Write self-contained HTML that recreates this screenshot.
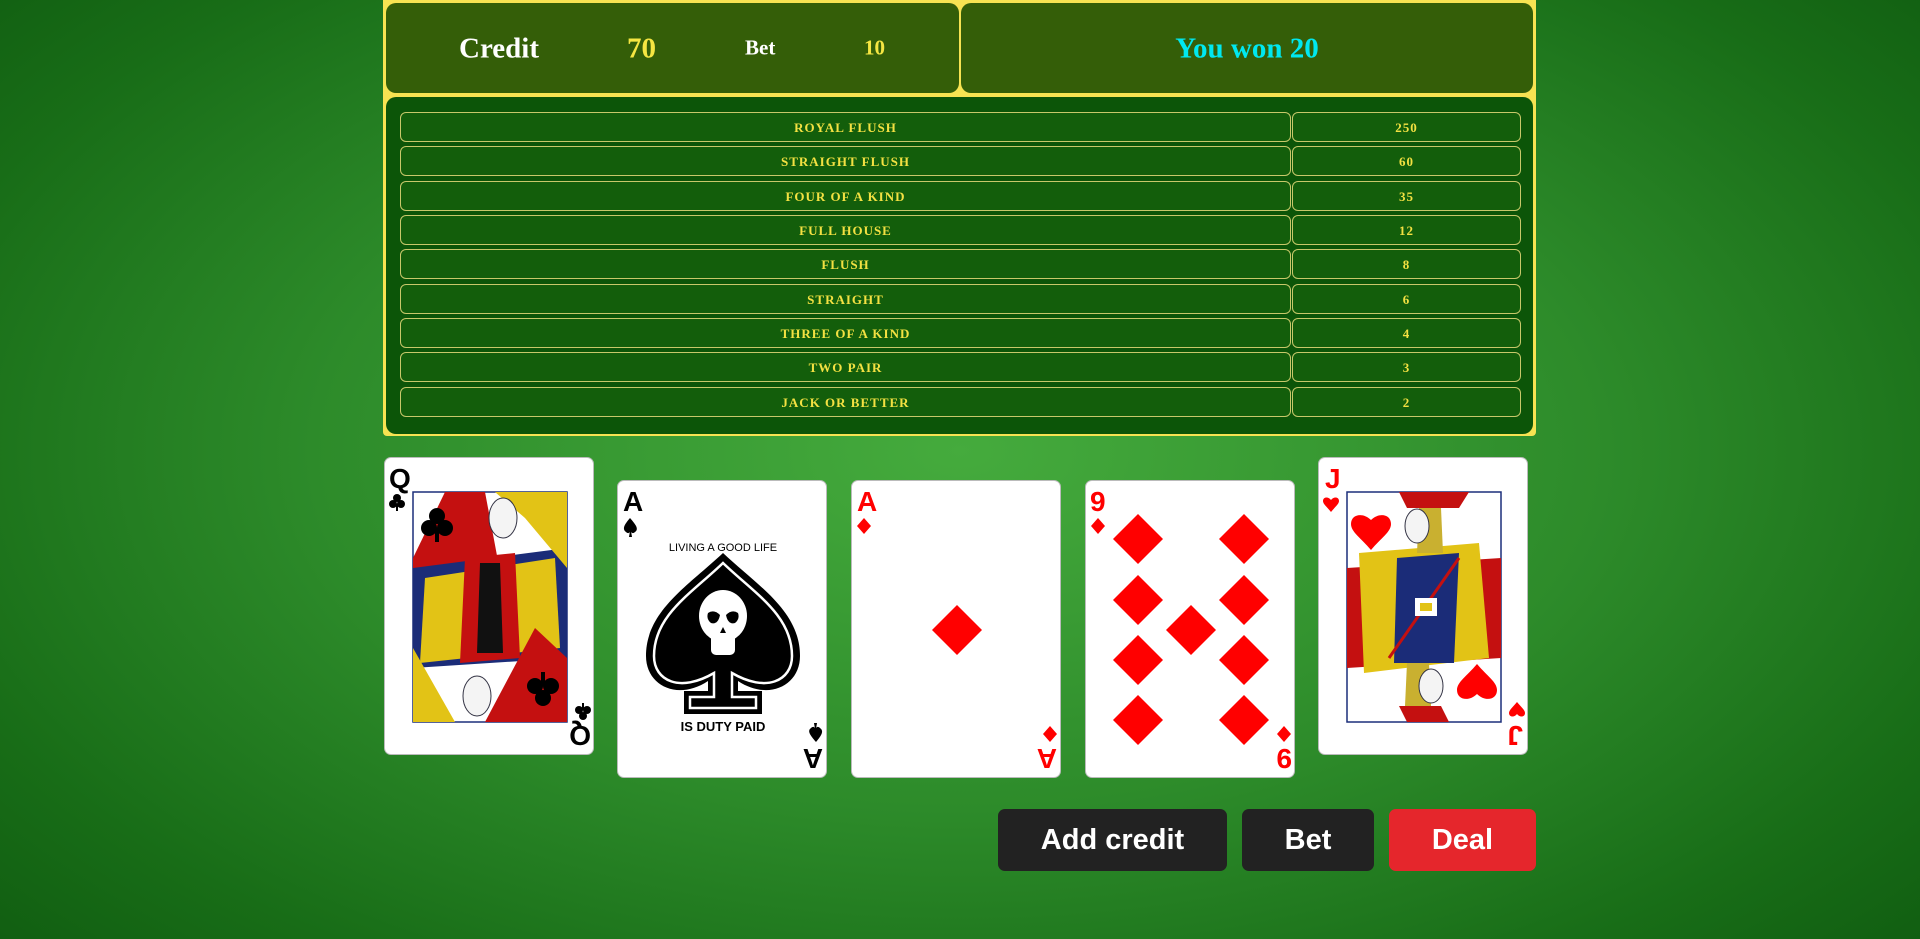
<!DOCTYPE html>
<html><head><meta charset="utf-8"><style>
html,body{margin:0;padding:0;width:1920px;height:939px;overflow:hidden;}
body{background:radial-gradient(ellipse 75% 85% at 50% 48%,#45ab3d 0%,#2d8b2a 45%,#186d17 75%,#0d560e 100%);font-family:"Liberation Serif",serif;position:relative;}
.wrap{position:absolute;left:383px;top:0;width:1153px;height:436px;background:#f7e352;border-radius:0 0 4px 4px;}
.hb{position:absolute;top:3px;height:90px;background:#345e08;border-radius:10px;}
.t{position:absolute;font-weight:bold;white-space:nowrap;transform:translateY(-50%);}
.pt{position:absolute;left:3px;top:97px;width:1147px;height:337px;background:#0c5508;border-radius:10px;}
.row{position:absolute;height:30px;background:#135e0b;border:1px solid #c8c86a;border-radius:6px;box-sizing:border-box;color:#f3e142;font-weight:bold;font-size:13px;letter-spacing:1px;text-align:center;line-height:30px;}
.card{position:absolute;width:210px;height:298px;background:#fff;border-radius:7px;border:1px solid #bbb;box-sizing:border-box;overflow:hidden;}
.card svg{position:absolute;left:0;top:0;}
.btn{position:absolute;top:809px;height:62px;border-radius:7px;background:#222;color:#fff;font-family:"Liberation Sans",sans-serif;font-weight:bold;font-size:29px;text-align:center;line-height:62px;}
</style></head><body>
<div class="wrap">
 <div class="hb" style="left:3px;width:573px;"></div>
 <div class="hb" style="left:578px;width:572px;"></div>
 <div class="t" style="left:76px;top:49px;font-size:29px;color:#fff;">Credit</div>
 <div class="t" style="left:244px;top:49px;font-size:29px;color:#f5e642;">70</div>
 <div class="t" style="left:362px;top:48px;font-size:21px;color:#fff;">Bet</div>
 <div class="t" style="left:481px;top:48px;font-size:21px;color:#f5e642;">10</div>
 <div class="t" style="left:864px;top:49px;font-size:29px;color:#00e8f0;transform:translate(-50%,-50%);">You won 20</div>
 <div class="pt">
  <div class="row" style="left:14px;top:15px;width:891px;">ROYAL FLUSH</div><div class="row" style="left:906px;top:15px;width:229px;">250</div>
  <div class="row" style="left:14px;top:49px;width:891px;">STRAIGHT FLUSH</div><div class="row" style="left:906px;top:49px;width:229px;">60</div>
  <div class="row" style="left:14px;top:84px;width:891px;">FOUR OF A KIND</div><div class="row" style="left:906px;top:84px;width:229px;">35</div>
  <div class="row" style="left:14px;top:118px;width:891px;">FULL HOUSE</div><div class="row" style="left:906px;top:118px;width:229px;">12</div>
  <div class="row" style="left:14px;top:152px;width:891px;">FLUSH</div><div class="row" style="left:906px;top:152px;width:229px;">8</div>
  <div class="row" style="left:14px;top:187px;width:891px;">STRAIGHT</div><div class="row" style="left:906px;top:187px;width:229px;">6</div>
  <div class="row" style="left:14px;top:221px;width:891px;">THREE OF A KIND</div><div class="row" style="left:906px;top:221px;width:229px;">4</div>
  <div class="row" style="left:14px;top:255px;width:891px;">TWO PAIR</div><div class="row" style="left:906px;top:255px;width:229px;">3</div>
  <div class="row" style="left:14px;top:290px;width:891px;">JACK OR BETTER</div><div class="row" style="left:906px;top:290px;width:229px;">2</div>
 </div>
</div>

<div class="card" style="left:384px;top:457px;">
<svg width="210" height="298" viewBox="0 0 210 298" font-family="Liberation Sans,sans-serif" font-weight="bold">
 <rect x="28" y="34" width="154" height="230" fill="#fff" stroke="#1c2f7a" stroke-width="1.5"/>
 <path d="M60 34 L100 34 L120 140 L70 150 L28 130 L28 100Z" fill="#c41010"/>
 <path d="M28 110 L182 90 L182 200 L28 210Z" fill="#1b2c78"/>
 <path d="M40 120 L170 100 L175 190 L35 205Z" fill="#e2c316"/>
 <path d="M80 100 L130 95 L135 200 L75 205Z" fill="#c41010"/>
 <path d="M95 105 L115 105 L118 195 L92 195Z" fill="#111"/>
 <path d="M110 34 L182 34 L182 110 L140 60Z" fill="#e2c316"/>
 <path d="M28 190 L70 264 L28 264Z" fill="#e2c316"/>
 <path d="M100 264 L182 264 L182 200 L150 170Z" fill="#c41010"/>
 <ellipse cx="118" cy="60" rx="14" ry="20" fill="#f4f4f4" stroke="#334" stroke-width="1"/>
 <ellipse cx="92" cy="238" rx="14" ry="20" fill="#f4f4f4" stroke="#334" stroke-width="1"/>
 <g fill="#000"><circle cx="52" cy="58" r="8"/><circle cx="44" cy="70" r="8"/><circle cx="60" cy="70" r="8"/><rect x="50" y="70" width="4" height="14"/></g>
 <g fill="#000"><circle cx="158" cy="240" r="8"/><circle cx="150" cy="228" r="8"/><circle cx="166" cy="228" r="8"/><rect x="156" y="214" width="4" height="14"/></g>
 <text x="4" y="30" font-size="28" fill="#000">Q</text>
 <g fill="#000"><circle cx="12" cy="40" r="4"/><circle cx="8" cy="46" r="4"/><circle cx="16" cy="46" r="4"/><rect x="11" y="46" width="2" height="7"/></g>
 <g transform="rotate(180 105 149)"><text x="4" y="30" font-size="28" fill="#000">Q</text>
 <g fill="#000"><circle cx="12" cy="40" r="4"/><circle cx="8" cy="46" r="4"/><circle cx="16" cy="46" r="4"/><rect x="11" y="46" width="2" height="7"/></g></g>
</svg></div>

<div class="card" style="left:617px;top:480px;">
<svg width="210" height="298" viewBox="0 0 210 298" font-family="Liberation Sans,sans-serif" font-weight="bold">
 <text x="5" y="30" font-size="28" fill="#000">A</text>
 <path d="M12 37 C6 44 4 48 8 51 C10 53 12 52 12 50 L11 56 L14 56 L13 50 C13 52 15 53 17 51 C21 48 18 44 12 37Z" fill="#000"/>
 <g transform="rotate(180 105 149)"><text x="5" y="30" font-size="28" fill="#000">A</text>
 <path d="M12 37 C6 44 4 48 8 51 C10 53 12 52 12 50 L11 56 L14 56 L13 50 C13 52 15 53 17 51 C21 48 18 44 12 37Z" fill="#000"/></g>
 <path d="M105 72 C70 105 28 130 28 175 C28 205 60 220 90 200 L90 210 L66 210 L66 233 L144 233 L144 210 L120 210 L120 200 C150 220 182 205 182 175 C182 130 140 105 105 72Z" fill="#000"/>
 <path d="M105 82 C74 112 36 134 36 175 C36 200 62 212 96 192 L96 216 L72 216 L72 227 L138 227 L138 216 L114 216 L114 192 C148 212 174 200 174 175 C174 134 136 112 105 82Z" fill="none" stroke="#fff" stroke-width="2.5"/>
 <ellipse cx="105" cy="135" rx="24" ry="26" fill="#fff"/>
 <rect x="93" y="152" width="24" height="22" rx="5" fill="#fff"/>
 <path d="M90 132 Q96 128 102 134 Q100 144 93 142 Q88 138 90 132Z" fill="#000"/><path d="M120 132 Q114 128 108 134 Q110 144 117 142 Q122 138 120 132Z" fill="#000"/>
 <path d="M105 146 L102 152 L108 152Z" fill="#000"/>
 <text x="105" y="70" font-size="11" text-anchor="middle" fill="#000" font-weight="normal">LIVING A GOOD LIFE</text>
 <text x="105" y="250" font-size="13" text-anchor="middle" fill="#000">IS DUTY PAID</text>
</svg></div>

<div class="card" style="left:851px;top:480px;">
<svg width="210" height="298" viewBox="0 0 210 298" font-family="Liberation Sans,sans-serif" font-weight="bold">
 <g fill="#f00"><text x="5" y="30" font-size="28">A</text><path d="M12 37 L19 45 L12 53 L5 45Z"/>
 <g transform="rotate(180 105 149)"><text x="5" y="30" font-size="28">A</text><path d="M12 37 L19 45 L12 53 L5 45Z"/></g>
 <path d="M105 124 L130 149 L105 174 L80 149Z"/></g>
</svg></div>

<div class="card" style="left:1085px;top:480px;">
<svg width="210" height="298" viewBox="0 0 210 298" font-family="Liberation Sans,sans-serif" font-weight="bold">
 <g fill="#f00"><text x="4" y="30" font-size="28">9</text><path d="M12 37 L19 45 L12 53 L5 45Z"/>
 <g transform="rotate(180 105 149)"><text x="4" y="30" font-size="28">9</text><path d="M12 37 L19 45 L12 53 L5 45Z"/></g>
 <path d="M0 -25 L25 0 L0 25 L-25 0Z" transform="translate(52 58)"/>
 <path d="M0 -25 L25 0 L0 25 L-25 0Z" transform="translate(158 58)"/>
 <path d="M0 -25 L25 0 L0 25 L-25 0Z" transform="translate(52 119)"/>
 <path d="M0 -25 L25 0 L0 25 L-25 0Z" transform="translate(158 119)"/>
 <path d="M0 -25 L25 0 L0 25 L-25 0Z" transform="translate(105 149)"/>
 <path d="M0 -25 L25 0 L0 25 L-25 0Z" transform="translate(52 179)"/>
 <path d="M0 -25 L25 0 L0 25 L-25 0Z" transform="translate(158 179)"/>
 <path d="M0 -25 L25 0 L0 25 L-25 0Z" transform="translate(52 239)"/>
 <path d="M0 -25 L25 0 L0 25 L-25 0Z" transform="translate(158 239)"/></g>
</svg></div>

<div class="card" style="left:1318px;top:457px;">
<svg width="210" height="298" viewBox="0 0 210 298" font-family="Liberation Sans,sans-serif" font-weight="bold">
 <rect x="28" y="34" width="154" height="230" fill="#fff" stroke="#1c2f7a" stroke-width="1.5"/>
 <path d="M80 34 L150 34 L140 50 L88 50Z" fill="#c41010"/>
 <path d="M88 264 L130 264 L122 248 L80 248Z" fill="#c41010"/>
 <path d="M28 110 L182 100 L182 200 L28 210Z" fill="#c41010"/>
 <path d="M40 95 L160 85 L170 200 L45 215Z" fill="#e2c316"/>
 <path d="M78 100 L140 95 L135 205 L75 205Z" fill="#1b2c78"/>
 <path d="M100 50 L122 50 L124 95 L98 95Z" fill="#c9b030"/>
 <path d="M88 205 L110 205 L112 248 L86 248Z" fill="#c9b030"/>
 <path d="M70 200 L140 100" stroke="#c41010" stroke-width="3"/>
 <rect x="96" y="140" width="22" height="18" fill="#fff"/><rect x="101" y="145" width="12" height="8" fill="#e2c316"/>
 <ellipse cx="98" cy="68" rx="12" ry="17" fill="#f4f4f4" stroke="#334" stroke-width="1"/>
 <ellipse cx="112" cy="228" rx="12" ry="17" fill="#f4f4f4" stroke="#334" stroke-width="1"/>
 <g fill="#f00">
 <path d="M52 62 C44 54 32 56 32 66 C32 74 42 80 52 92 C62 80 72 74 72 66 C72 56 60 54 52 62Z"/>
 <path d="M158 236 C166 244 178 242 178 232 C178 224 168 218 158 206 C148 218 138 224 138 232 C138 242 150 244 158 236Z"/>
 <text x="6" y="30" font-size="28">J</text>
 <path d="M12 42 C9 38 4 39 4 43 C4 46 8 49 12 54 C16 49 20 46 20 43 C20 39 15 38 12 42Z"/>
 <g transform="rotate(180 105 149)"><text x="6" y="30" font-size="28">J</text>
 <path d="M12 42 C9 38 4 39 4 43 C4 46 8 49 12 54 C16 49 20 46 20 43 C20 39 15 38 12 42Z"/></g></g>
</svg></div>

<div class="btn" style="left:998px;width:229px;">Add credit</div>
<div class="btn" style="left:1242px;width:132px;">Bet</div>
<div class="btn" style="left:1389px;width:147px;background:#e5262c;">Deal</div>
</body></html>
